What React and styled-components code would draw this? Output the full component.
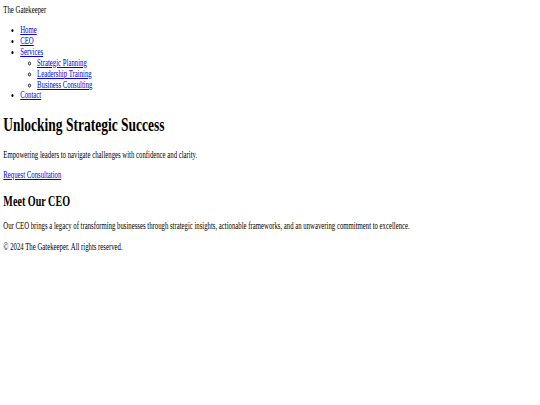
import React from "react";
import styled, { createGlobalStyle } from "styled-components";

// the shot is squeezed sideways: horizontal scale 0.422, vertical 0.593
const GlobalStyle = createGlobalStyle`
  body {
    margin: 0;
    background: #fff;
  }
`;

const Page = styled.div`
  width: 759px;
  box-sizing: border-box;
  padding: 0.5em;
  transform: scaleX(0.7114);
  transform-origin: left top;
  font-family: "Liberation Serif", "Times New Roman", serif;
  font-size: 9.49px;
  line-height: 1.149;
  color: #000;
`;

const Header = styled.header``;

const Logo = styled.div``;

const Menu = styled.ul`
  margin: ${(p) => (p.$sub ? "0" : "1em 0")};
  padding-left: 2.5em;
  list-style: ${(p) => (p.$sub ? "circle" : "disc")};
`;

const Link = styled.a`
  color: #0000ee;
  text-decoration: underline;
`;

const Title = styled.h1`
  font-size: 2em;
  margin: 0.67em 0 0.75em;
  font-weight: bold;
`;

const Subtitle = styled.h2`
  font-size: 1.5em;
  margin: 0.83em 0;
  font-weight: bold;
`;

const Text = styled.p`
  margin: 1em 0;
`;

export default function App() {
  return (
    <>
      <GlobalStyle />
      <Page>
        <Header>
          <Logo>The Gatekeeper</Logo>
          <nav>
            <Menu>
              <li><Link href="#">Home</Link></li>
              <li><Link href="#">CEO</Link></li>
              <li>
                <Link href="#">Services</Link>
                <Menu $sub>
                  <li><Link href="#">Strategic Planning</Link></li>
                  <li><Link href="#">Leadership Training</Link></li>
                  <li><Link href="#">Business Consulting</Link></li>
                </Menu>
              </li>
              <li><Link href="#">Contact</Link></li>
            </Menu>
          </nav>
        </Header>
        <main>
          <section>
            <Title>Unlocking Strategic Success</Title>
            <Text>Empowering leaders to navigate challenges with confidence and clarity.</Text>
            <Link href="#">Request Consultation</Link>
          </section>
          <section>
            <Subtitle>Meet Our CEO</Subtitle>
            <Text>
              Our CEO brings a legacy of transforming businesses through strategic insights, actionable frameworks, and an unwavering commitment to excellence.
            </Text>
          </section>
        </main>
        <footer>
          <Text>© 2024 The Gatekeeper. All rights reserved.</Text>
        </footer>
      </Page>
    </>
  );
}
